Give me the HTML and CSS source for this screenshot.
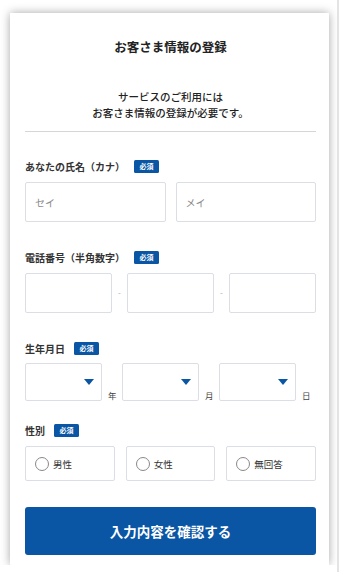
FILE: index.html
```html
<!DOCTYPE html>
<html lang="ja">
<head>
    <meta charset="UTF-8">
    <meta name="viewport" content="width=device-width, initial-scale=1.0">
    <title>お客さま情報の登録</title>
    <link rel="stylesheet" href="styles.css">
</head>
<body>

    <div class="card">
        <h2 class="title">お客さま情報の登録</h2>
        <p class="lead">サービスのご利用には<br>お客さま情報の登録が必要です。</p>
        <hr class="divider">

        <form id="customerForm">
            <div class="field">
                <div class="label">あなたの氏名（カナ）<span class="badge">必須</span></div>
                <div class="row">
                    <input type="text" class="text-input" placeholder="セイ">
                    <input type="text" class="text-input" placeholder="メイ">
                </div>
            </div>

            <div class="field">
                <div class="label">電話番号（半角数字）<span class="badge">必須</span></div>
                <div class="row row-tel">
                    <input type="text" class="text-input">
                    <span class="sep">-</span>
                    <input type="text" class="text-input">
                    <span class="sep">-</span>
                    <input type="text" class="text-input">
                </div>
            </div>

            <div class="field">
                <div class="label">生年月日<span class="badge">必須</span></div>
                <div class="row row-date">
                    <span class="select-box"><select></select></span>
                    <span class="unit">年</span>
                    <span class="select-box"><select></select></span>
                    <span class="unit">月</span>
                    <span class="select-box"><select></select></span>
                    <span class="unit">日</span>
                </div>
            </div>

            <div class="field field-gender">
                <div class="label">性別<span class="badge">必須</span></div>
                <div class="row row-gender">
                    <label class="radio"><input type="radio" name="gender"><span class="circle"></span>男性</label>
                    <label class="radio"><input type="radio" name="gender"><span class="circle"></span>女性</label>
                    <label class="radio"><input type="radio" name="gender"><span class="circle"></span>無回答</label>
                </div>
            </div>

            <button type="submit" class="submit">入力内容を確認する</button>
        </form>
    </div>

</body>
</html>
```

FILE: styles.css
```css
body {
    margin: 0;
    padding: 13px 0 0 10px;
    background: #fff;
    font-family: "Noto Sans CJK JP", "Noto Sans", sans-serif;
    color: #333;
}

/* faint edge on the right of the window */
body::after {
    content: "";
    position: fixed;
    top: 0;
    bottom: 0;
    left: 337px;
    width: 2px;
    background: #e4e4e4;
}

.card {
    width: 319px;
    height: 552px;
    box-sizing: border-box;
    padding: 25px 13px 0 15px;
    background: #fff;
    box-shadow: 0 0 9px rgba(0, 0, 0, 0.35);
}

.title {
    margin: 0;
    font-size: 12.5px;
    line-height: 18px;
    font-weight: bold;
    text-align: center;
    color: #222;
}

.lead {
    margin: 33px 0 0;
    font-size: 10.5px;
    line-height: 16px;
    font-weight: 500;
    text-align: center;
    color: #222;
}

.divider {
    margin: 10px 0 0;
    border: none;
    border-top: 1px solid #d6d6d6;
}

.field {
    margin-top: 27px;
}

.field + .field {
    margin-top: 28px;
}

.field-gender {
    margin-top: 22px !important;
}

.label {
    display: flex;
    align-items: center;
    height: 14px;
    font-size: 10px;
    font-weight: bold;
    color: #333;
}

.badge {
    display: inline-block;
    width: 25px;
    height: 13px;
    margin-left: 9px;
    background: #0a56a5;
    border-radius: 1.5px;
    color: #fff;
    font-size: 7px;
    line-height: 13px;
    text-align: center;
}

.row {
    display: flex;
    gap: 10px;
    margin-top: 9px;
}

.text-input {
    flex: 1;
    min-width: 0;
    height: 40px;
    box-sizing: border-box;
    padding: 0 9px;
    border: 1.5px solid #dcdee5;
    border-radius: 2px;
    font-family: inherit;
    font-size: 10px;
    color: #333;
}

.text-input::placeholder {
    color: #8a8a8a;
}

.row-tel {
    gap: 0;
}

.sep {
    width: 15px;
    text-align: center;
    font-size: 8px;
    line-height: 40px;
    color: #aaa;
}

.row-date {
    gap: 0;
    margin-top: 8px;
}

.select-box {
    position: relative;
    width: 77px;
    height: 38px;
}

.select-box select {
    width: 100%;
    height: 100%;
    appearance: none;
    border: 1.5px solid #dcdee5;
    border-radius: 2px;
    background: #fff;
}

.select-box::after {
    content: "";
    position: absolute;
    right: 8px;
    top: 16px;
    border-left: 5px solid transparent;
    border-right: 5px solid transparent;
    border-top: 6px solid #0a56a5;
}

.unit {
    width: 20px;
    box-sizing: border-box;
    padding: 0 0 0 6px;
    align-self: flex-end;
    font-size: 8.5px;
    line-height: 12px;
    color: #444;
}

.row-gender {
    gap: 11px;
}

.radio {
    flex: 1;
    display: flex;
    align-items: center;
    height: 35px;
    box-sizing: border-box;
    padding-left: 9px;
    border: 1.5px solid #dcdee5;
    border-radius: 2px;
    font-size: 9.5px;
    color: #333;
}

.radio input {
    display: none;
}

.circle {
    width: 14px;
    height: 14px;
    box-sizing: border-box;
    margin-right: 4px;
    border: 1.2px solid #888;
    border-radius: 50%;
}

.submit {
    display: block;
    width: 100%;
    height: 48px;
    margin-top: 26px;
    border: none;
    border-radius: 3px;
    background: #0a56a5;
    color: #fff;
    font-family: inherit;
    font-size: 13.5px;
    font-weight: bold;
    cursor: pointer;
}
```
